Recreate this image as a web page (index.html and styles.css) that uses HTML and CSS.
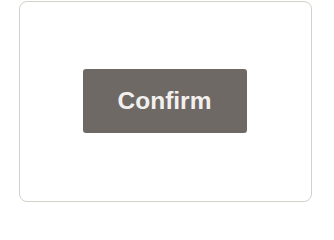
FILE: index.html
```html
<!DOCTYPE html>
<html>
<head>
<meta charset="utf-8">
<link rel="stylesheet" href="styles.css">
</head>
<body>
<div class="card">
  <button class="confirm">Confirm</button>
</div>
</body>
</html>
```
FILE: styles.css
```css
html, body {
  margin: 0;
  padding: 0;
  background: #ffffff;
}
body {
  padding: 1px 0 0 19px;
}
.card {
  box-sizing: border-box;
  width: 293px;
  height: 201px;
  border: 1.5px solid #d2d2c9;
  border-radius: 8px;
  background: #ffffff;
  display: flex;
  align-items: center;
  justify-content: center;
}
.confirm {
  box-sizing: border-box;
  width: 164px;
  height: 64px;
  border: none;
  border-radius: 3px;
  background: #6e6964;
  color: #f2f0ee;
  font-family: "Liberation Sans", Arial, sans-serif;
  font-weight: bold;
  font-size: 24.5px;
  padding: 0;
  margin: -1px 2px 0 0;
}
```
